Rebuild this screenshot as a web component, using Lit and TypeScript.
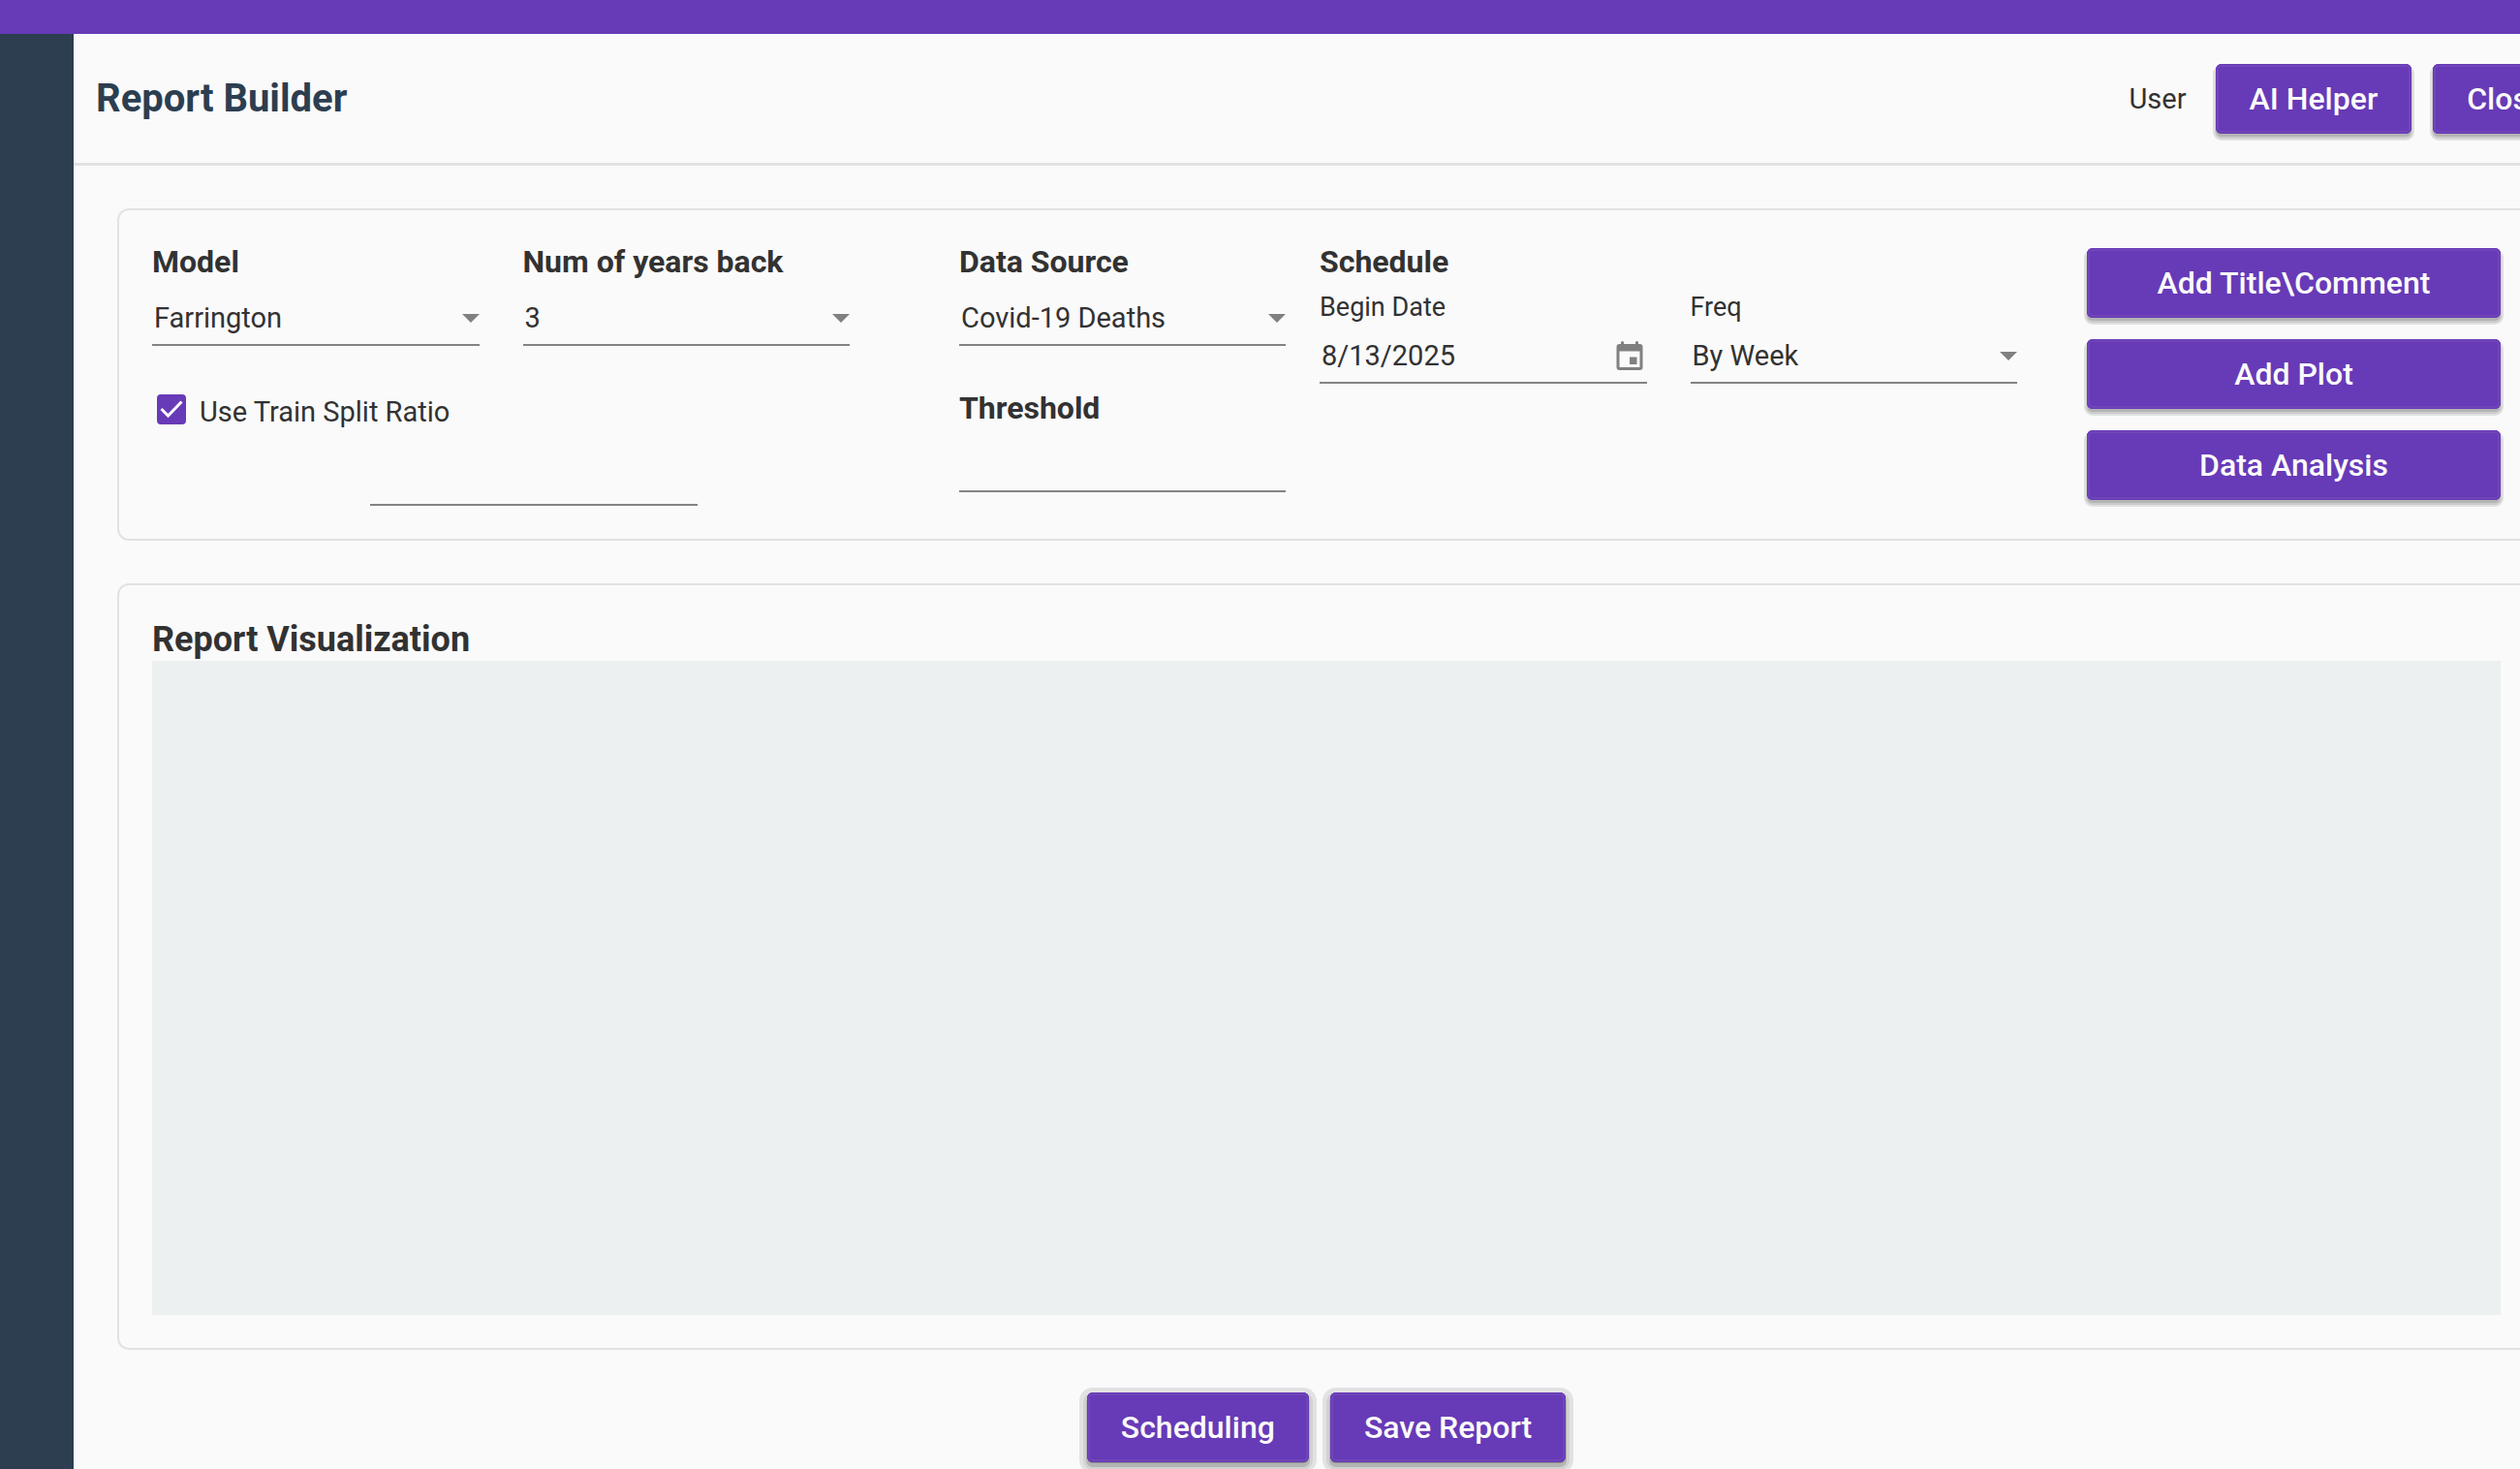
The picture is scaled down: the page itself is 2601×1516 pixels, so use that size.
import { LitElement, html, css, nothing } from "lit";
import { customElement, state } from "lit/decorators.js";

@customElement("app-root")
export class AppRoot extends LitElement {
  static styles = css`
    :host {
      display: block;
      height: 100vh;
      overflow: hidden;
      background: #fafafa;
      color: #323232;
      font-family: Roboto, "Liberation Sans", sans-serif;
      font-size: 29px;
    }
    * {
      box-sizing: border-box;
    }
    h1,
    h2,
    h3 {
      margin: 0;
    }
    .shell {
      display: flex;
      flex-direction: column;
      min-height: 100%;
    }
    .topbar {
      height: 35px;
      flex: none;
      background: #673ab7;
    }
    .body {
      display: flex;
      flex: 1;
    }
    .sidebar {
      width: 76px;
      flex: none;
      background: #2c3e50;
    }
    /* The page area is wider than the viewport and runs off its right edge. */
    .page {
      flex: 1;
      min-width: 0;
      margin-right: -61px;
    }
    .header {
      display: flex;
      align-items: center;
      gap: 22px;
      padding: 31px 0 30px 23px;
      border-bottom: 3px solid #e2e2e2;
    }
    .header h1 {
      flex: 1;
      font-size: 40px;
      line-height: 48px;
      color: #2c3e50;
    }
    .user {
      padding-right: 8px;
    }
    .content {
      display: flex;
      flex-direction: column;
      gap: 44px;
      padding: 44px 45px 0;
    }
    .panel {
      border: 2px solid #e2e2e2;
      border-radius: 12px;
      padding: 34px;
    }
    .settings {
      display: grid;
      grid-template-columns: 833fr 372fr 792fr 427fr;
    }
    .pair {
      display: grid;
      grid-template-columns: 1fr 1fr;
      column-gap: 45px;
      align-content: start;
    }
    .model {
      padding-right: 113px;
    }
    .source {
      padding-right: 35px;
    }
    .schedule {
      padding-right: 72px;
    }
    .wide {
      grid-column: 1 / -1;
    }
    .title {
      display: block;
      font-size: 32px;
      line-height: 38px;
      font-weight: 700;
    }
    .caption {
      display: block;
      font-size: 27px;
      line-height: 32px;
      margin: 12px 0 7px;
    }
    .field {
      display: grid;
      align-items: center;
      height: 56px;
      border-bottom: 2px solid #838383;
    }
    .title + .field {
      margin-top: 12px;
    }
    .field > * {
      grid-area: 1 / 1;
    }
    .control {
      appearance: none;
      width: 100%;
      height: 54px;
      margin: 0;
      padding: 0 40px 0 2px;
      border: 0;
      border-radius: 0;
      outline: 0;
      background: transparent;
      color: inherit;
      font: inherit;
    }
    .arrow {
      justify-self: end;
      width: 18px;
      height: 9px;
      fill: #808080;
      pointer-events: none;
    }
    .pick {
      justify-self: end;
      width: 36px;
      height: 36px;
      padding: 0;
      border: 0;
      background: none;
      cursor: pointer;
    }
    .pick svg {
      display: block;
      width: 36px;
      height: 36px;
      fill: #808080;
    }
    .check {
      display: flex;
      align-items: flex-start;
      gap: 14px;
      margin-top: 50px;
      padding-left: 5px;
      line-height: 36px;
    }
    .box {
      display: grid;
      width: 30px;
      height: 31px;
    }
    .box > * {
      grid-area: 1 / 1;
      width: 30px;
      height: 31px;
      margin: 0;
    }
    .box input {
      appearance: none;
      border: 3px solid #808080;
      border-radius: 4px;
    }
    .box input:checked {
      border-color: #673ab7;
      background: #673ab7;
    }
    .box svg {
      fill: none;
      stroke: #fafafa;
      stroke-width: 3;
      pointer-events: none;
    }
    .ratio {
      width: 47%;
      margin: 23px 0 0 225px;
    }
    .threshold {
      margin-top: 45px;
    }
    .button {
      height: 72px;
      padding: 0 35px;
      border: 0;
      border-radius: 6px;
      background: #673ab7;
      color: #fafafa;
      font: 500 32px/38px Roboto, "Liberation Sans", sans-serif;
      white-space: nowrap;
      cursor: pointer;
      box-shadow:
        inset 0 0 0 1px #673ab7,
        inset 0 0 0 3px #7045b9,
        0 3px 0 0 #b4b4b4,
        0 4px 0 1px #cbcbcb,
        0 4px 0 3px #e0e0e0;
    }
    .actions {
      display: flex;
      flex-direction: column;
      gap: 22px;
      padding-top: 5px;
    }
    .report h2 {
      font-size: 36px;
      line-height: 44px;
    }
    .canvas {
      height: 675px;
      background: #ecf0f1;
    }
    .footer {
      display: flex;
      justify-content: center;
      gap: 22px;
    }
    .footer .button {
      box-shadow:
        inset 0 0 0 1px #673ab7,
        inset 0 0 0 3px #7045b9,
        0 1px 0 0 #8c8c8c,
        0 4px 0 1px #b4b4b4,
        0 4px 0 4px #d2d2d2,
        0 3px 0 8px #e2e2e2;
    }
  `;

  @state() private useSplit = true;

  private select(id: string, options: string[]) {
    return html`<div class="field">
      <select class="control" id=${id}>
        ${options.map((o) => html`<option>${o}</option>`)}
      </select>
      <svg class="arrow" viewBox="0 0 18 9" aria-hidden="true"><path d="M0 0h18L9 9z" /></svg>
    </div>`;
  }

  render() {
    return html`
      <div class="shell">
        <div class="topbar"></div>
        <div class="body">
          <nav class="sidebar"></nav>
          <main class="page">
            <header class="header">
              <h1>Report Builder</h1>
              <span class="user">User</span>
              <button class="button" type="button">AI Helper</button>
              <button class="button" type="button">Close</button>
            </header>
            <div class="content">
              <section class="panel settings">
                <div class="pair model">
                  <div>
                    <label class="title" for="model">Model</label>
                    ${this.select("model", ["Farrington"])}
                  </div>
                  <div>
                    <label class="title" for="years">Num of years back</label>
                    ${this.select("years", ["3"])}
                  </div>
                  <div class="wide">
                    <label class="check">
                      <span class="box">
                        <input
                          type="checkbox"
                          .checked=${this.useSplit}
                          @change=${(e: Event) =>
                            (this.useSplit = (e.target as HTMLInputElement).checked)}
                        />
                        ${this.useSplit
                          ? html`<svg viewBox="0 0 30 31" aria-hidden="true">
                              <path d="M4.500 15l7 7L25.500 7.500" />
                            </svg>`
                          : nothing}
                      </span>
                      <span>Use Train Split Ratio</span>
                    </label>
                    <div class="field ratio">
                      <input class="control" type="text" aria-label="Train Split Ratio" />
                    </div>
                  </div>
                </div>
                <div class="source">
                  <label class="title" for="source">Data Source</label>
                  ${this.select("source", ["Covid-19 Deaths"])}
                  <label class="title threshold" for="threshold">Threshold</label>
                  <div class="field">
                    <input class="control" id="threshold" type="text" />
                  </div>
                </div>
                <div class="pair schedule">
                  <h3 class="title wide">Schedule</h3>
                  <div>
                    <label class="caption" for="begin">Begin Date</label>
                    <div class="field">
                      <input class="control" id="begin" type="text" value="8/13/2025" />
                      <button class="pick" type="button" aria-label="Open calendar">
                        <svg viewBox="0 0 24 24" aria-hidden="true">
                          <path
                            d="M19 4h-1V3a1 1 0 0 0-2 0v1H8V3a1 1 0 0 0-2 0v1H5a2 2 0 0 0-2 2v14a2 2 0 0 0 2 2h14a2 2 0 0 0 2-2V6a2 2 0 0 0-2-2zm0 16H5V9h14zM12 13h5v5h-5z"
                          />
                        </svg>
                      </button>
                    </div>
                  </div>
                  <div>
                    <label class="caption" for="freq">Freq</label>
                    ${this.select("freq", ["By Week"])}
                  </div>
                </div>
                <div class="actions">
                  <button class="button" type="button">Add Title\\Comment</button>
                  <button class="button" type="button">Add Plot</button>
                  <button class="button" type="button">Data Analysis</button>
                </div>
              </section>
              <section class="panel report">
                <h2>Report Visualization</h2>
                <div class="canvas"></div>
              </section>
              <div class="footer">
                <button class="button" type="button">Scheduling</button>
                <button class="button" type="button">Save Report</button>
              </div>
            </div>
          </main>
        </div>
      </div>
    `;
  }
}
